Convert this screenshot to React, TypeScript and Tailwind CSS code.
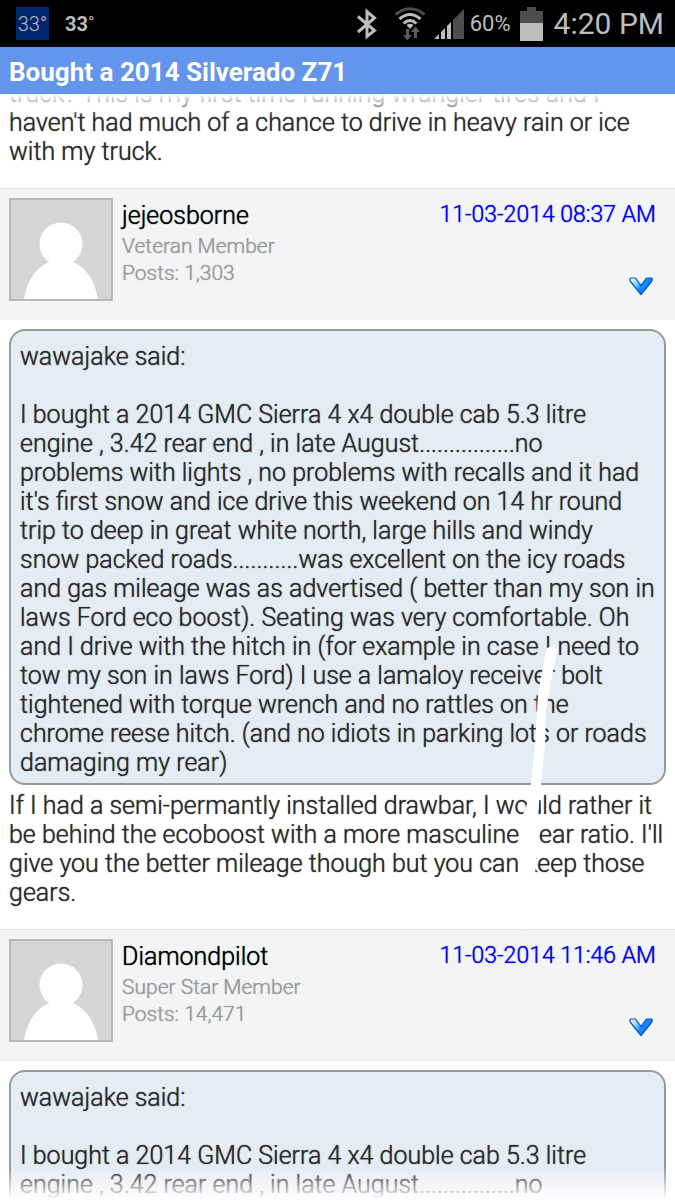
import type { ReactNode } from 'react';

interface Post {
  author: string;
  rank: string;
  posts: string;
  date: string;
}

const posts: Post[] = [
  { author: 'jejeosborne', rank: 'Veteran Member', posts: '1,303', date: '11-03-2014 08:37 AM' },
  { author: 'Diamondpilot', rank: 'Super Star Member', posts: '14,471', date: '11-03-2014 11:46 AM' },
];

const previousPost = `truck? This is my first time running wrangler tires and I
haven't had much of a chance to drive in heavy rain or ice
with my truck.`;

const quoteStart = `I bought a 2014 GMC Sierra 4 x4 double cab 5.3 litre
engine , 3.42 rear end , in late August................no`;

const fullQuote = `${quoteStart}
problems with lights , no problems with recalls and it had
it's first snow and ice drive this weekend on 14 hr round
trip to deep in great white north, large hills and windy
snow packed roads...........was excellent on the icy roads
and gas mileage was as advertised ( better than my son in
laws Ford eco boost). Seating was very comfortable. Oh
and I drive with the hitch in (for example in case I need to
tow my son in laws Ford) I use a lamaloy receiver bolt
tightened with torque wrench and no rattles on the
chrome reese hitch. (and no idiots in parking lots or roads
damaging my rear)`;

const reply = `If I had a semi-permantly installed drawbar, I would rather it
be behind the ecoboost with a more masculine gear ratio. I'll
give you the better mileage though but you can keep those
gears.`;

function BluetoothIcon() {
  return (
    <svg width="22" height="32" viewBox="0 0 22 32" fill="none" stroke="#bdbdbd" strokeWidth="3">
      <path d="M2 8.500 18.500 22.500 11 28.500V3.500l7.500 6.500L2 24" />
    </svg>
  );
}

function WifiIcon() {
  return (
    <svg width="32" height="34" viewBox="0 0 32 34" fill="none">
      <path d="M1.500 7.500Q16-4 30.500 7.500" stroke="#4d4d4d" strokeWidth="3" />
      <path d="M5.500 12Q16 3 26.500 12" stroke="#bdbdbd" strokeWidth="3" />
      <path d="M9.500 16.500Q16 10.500 22.500 16.500" stroke="#bdbdbd" strokeWidth="3" />
      <path d="m16 22-3.500-4q3.500-2.500 7 0z" fill="#bdbdbd" />
      <path d="M12 22h3v6h3l-4.500 5.500L9 28h3zM20 31v-6h-3l4.500-5.500L26 25h-3v6z" fill="#5c5c5c" />
    </svg>
  );
}

function SignalIcon() {
  return (
    <svg width="30" height="30" viewBox="0 0 30 30">
      <path d="M19 11 30 0v30H19z" fill="#4d4d4d" />
      <path d="M0 30l5-5v5zM7 23l4-4v11H7zM13 17l4-4v17h-4z" fill="#bdbdbd" />
    </svg>
  );
}

function BatteryIcon() {
  return (
    <svg width="23" height="34" viewBox="0 0 23 34">
      <path d="M7 0h9v4h7v12H0V4h7z" fill="#4d4d4d" />
      <path d="M0 16h23v18H0z" fill="#bdbdbd" />
    </svg>
  );
}

function StatusBar() {
  return (
    <div className="flex h-[47px] shrink-0 items-center bg-black pr-[11px] pl-4 text-[#bdbdbd]">
      <span className="flex h-[33px] w-[33px] items-center justify-center bg-[#00266e] text-xl font-light">33°</span>
      <span className="ml-4 text-xl font-bold">33˚</span>
      <div className="ml-auto flex items-center">
        <BluetoothIcon />
        <span className="ml-4 flex"><WifiIcon /></span>
        <span className="ml-2 flex"><SignalIcon /></span>
        <span className="ml-[6px] text-[22px]">60%</span>
        <span className="ml-[9px] flex"><BatteryIcon /></span>
        <span className="ml-[11px] text-3xl">4:20 PM</span>
      </div>
    </div>
  );
}

function Avatar() {
  return (
    <svg className="shrink-0" width="104" height="103" viewBox="0 0 104 103">
      <path d="M1 1h102v101H1z" fill="#d6d6d6" stroke="#b8b8b8" strokeWidth="2" />
      <circle cx="52" cy="46" r="21.500" fill="#fff" />
      <path d="M15 101C19 78 32 62 52 62s33 16 37 39z" fill="#fff" />
    </svg>
  );
}

function PostHeader({ post }: { post: Post }) {
  const id = `menu-${post.author}`;
  return (
    <header className="flex h-[132px] border-t border-[#e3e3e3] bg-[#f3f4f6] px-[9px] pt-[9px]">
      <Avatar />
      <div className="ml-[9px] pt-px">
        <h2 className="text-[25px] leading-[34px] text-black">{post.author}</h2>
        <p className="text-[21px] leading-[27px] text-[#999]">{post.rank}</p>
        <p className="text-[21px] leading-[27px] text-[#999]">Posts: {post.posts}</p>
      </div>
      <div className="mr-[10px] ml-auto flex flex-col items-end">
        <a href={`#${id}`} className="text-[23px] leading-[34px] text-[#0000ee]">{post.date}</a>
        <button id={id} aria-label="Post menu" className="mt-11 mr-[2px]">
          <svg width="26" height="20" viewBox="0 0 26 20">
            <defs>
              <linearGradient id={`${id}-fill`} x1="0" y1="0" x2="1" y2="0.400">
                <stop offset="0.100" stopColor="#e4fbff" />
                <stop offset="0.400" stopColor="#74ccff" />
                <stop offset="0.600" stopColor="#128bff" />
                <stop offset="1" stopColor="#1683ff" />
              </linearGradient>
            </defs>
            <path
              d="M3 2H7.500L13 9.500 18.500 2H23.500Q25 3 23.500 5.500L13 18.500 2.500 5.500Q1 3 3 2Z"
              fill={`url(#${id}-fill)`}
              stroke="#0a4fb5"
              strokeWidth="1.200"
              strokeLinejoin="round"
            />
          </svg>
        </button>
      </div>
    </header>
  );
}

function Quote({ children, className }: { children: ReactNode; className: string }) {
  return (
    <blockquote className={`mx-[9px] mt-[9px] rounded-2xl border-2 border-[#999] bg-[#e4ecf4] px-[9px] pt-[11px] ${className}`}>
      <p>wawajake said:</p>
      <p className="mt-[29px] whitespace-pre">{children}</p>
    </blockquote>
  );
}

// White marker line drawn across the posts
function MarkerStroke() {
  return (
    <svg className="pointer-events-none absolute top-[550px] left-[510px]" width="60" height="290" viewBox="0 0 60 290">
      <path
        d="M36 6C38 1 46 1 47 6L41 38 36 67 35 100 31 140 29 160 28 175V205L26 220 21 280C20 287 6 287 5 279L9 222 9 180 17 160 21 140 25 100 28 50Z"
        fill="#fff"
      />
    </svg>
  );
}

export default function App() {
  return (
    <div className="flex h-screen flex-col overflow-hidden bg-white font-['Roboto','Liberation_Sans',sans-serif]">
      <StatusBar />
      <h1 className="h-[47px] shrink-0 bg-[#6495ed] px-[9px] text-[26px] leading-[50px] font-bold text-white">
        Bought a 2014 Silverado Z71
      </h1>
      <main className="relative min-h-0 flex-1 overflow-hidden text-[25px] leading-[29px] font-light text-[#2b2b2b] [text-shadow:0_0_1px_currentColor]">
        <p className="-mt-[15px] px-[9px] pb-[22px] whitespace-pre">{previousPost}</p>

        <article>
          <PostHeader post={posts[0]} />
          <Quote className="pb-[6px]">{fullQuote}</Quote>
          <p className="px-[9px] pt-[6px] pb-[22px] whitespace-pre">{reply}</p>
        </article>

        <article>
          <PostHeader post={posts[1]} />
          <Quote className="pb-16">{quoteStart}</Quote>
        </article>

        <MarkerStroke />
        <div className="absolute inset-x-0 top-0 h-6 bg-linear-to-b from-white to-white/0" />
        <div className="absolute inset-x-0 bottom-0 h-8 bg-linear-to-t from-white to-white/0" />
      </main>
    </div>
  );
}
